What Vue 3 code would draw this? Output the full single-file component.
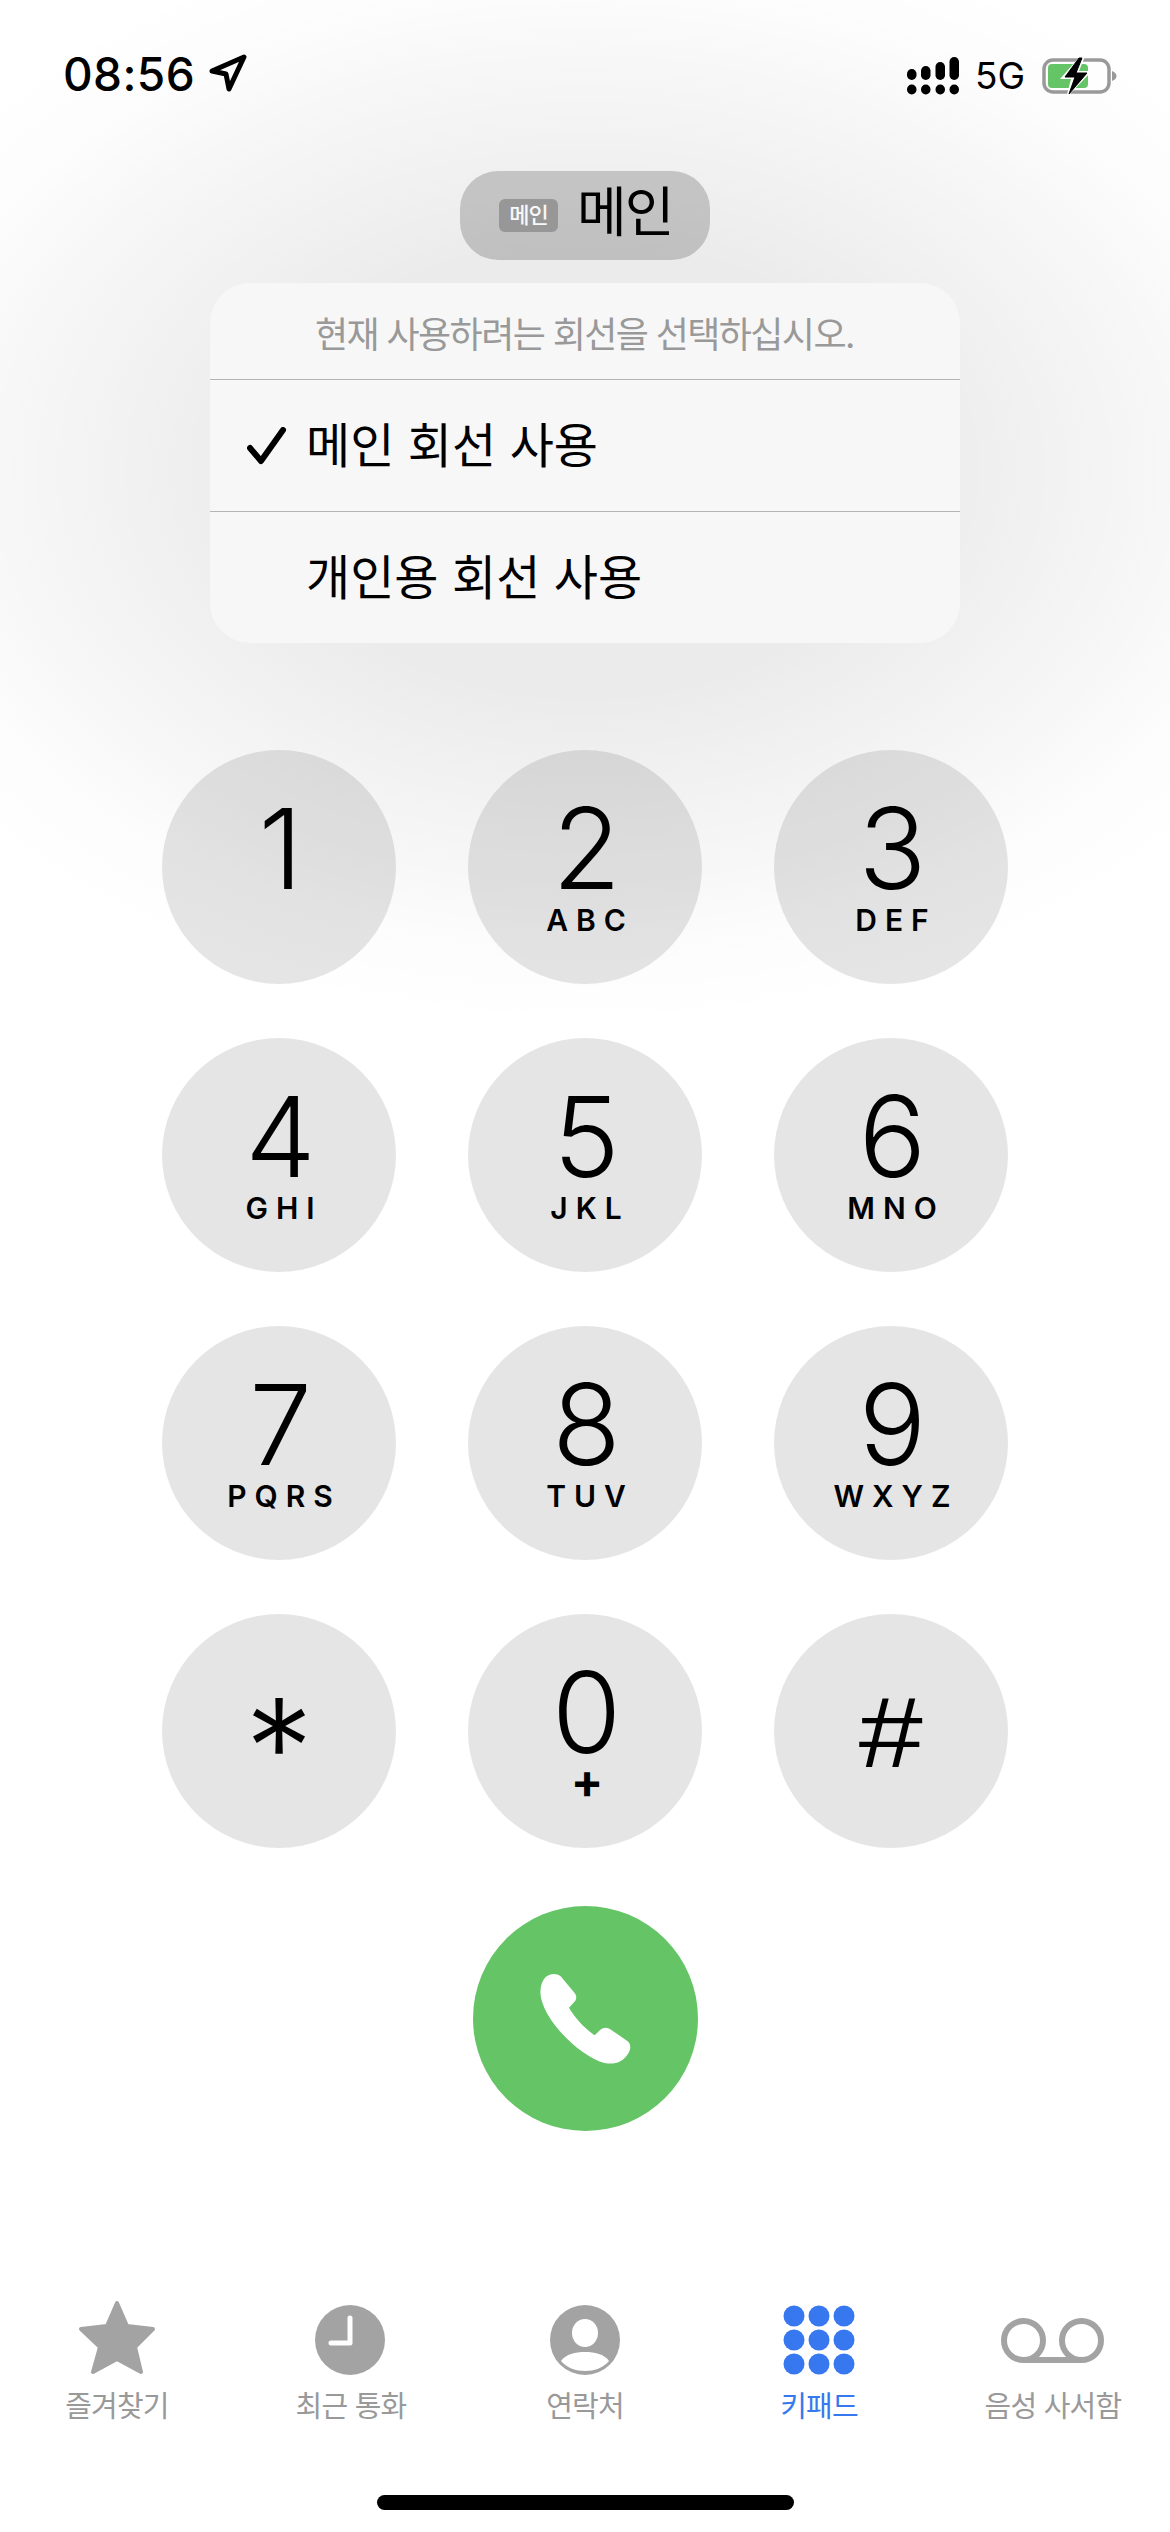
<script setup>
const keys = [
  { d: '1', l: '' }, { d: '2', l: 'ABC' }, { d: '3', l: 'DEF' },
  { d: '4', l: 'GHI' }, { d: '5', l: 'JKL' }, { d: '6', l: 'MNO' },
  { d: '7', l: 'PQRS' }, { d: '8', l: 'TUV' }, { d: '9', l: 'WXYZ' },
  { d: '*', l: '', k: 'star' }, { d: '0', l: '+', k: 'zero' }, { d: '#', l: '', k: 'hash' }
]
const tabs = [
  { id: 'star', label: '즐겨찾기' },
  { id: 'clock', label: '최근 통화' },
  { id: 'person', label: '연락처' },
  { id: 'pad', label: '키패드', active: true },
  { id: 'vm', label: '음성 사서함' }
]
const dots = [35, 60, 85].flatMap(x => [17, 41, 65].map(y => ({ x, y })))
</script>

<template>
  <div class="page">
    <header class="status">
      <div class="status-left">
        <span class="time">08:56</span>
        <svg class="loc" width="40" height="40" viewBox="0 0 40 40">
          <path d="M4 17 L36 3 L21 35 L18 20 Z" fill="none" stroke="#000" stroke-width="5" stroke-linejoin="round" />
        </svg>
      </div>
      <div class="status-right">
        <svg width="52" height="38" viewBox="0 0 52 38">
          <rect x="0" y="12" width="9.500" height="11" rx="4.700" />
          <rect x="14" y="9" width="9.500" height="14" rx="4.700" />
          <rect x="28.500" y="5" width="9.500" height="18" rx="4.700" />
          <rect x="42.500" y="0" width="9.500" height="23" rx="4.700" />
          <rect x="0" y="27.500" width="9.500" height="10" rx="4.700" />
          <rect x="14" y="27.500" width="9.500" height="10" rx="4.700" />
          <rect x="28.500" y="27.500" width="9.500" height="10" rx="4.700" />
          <rect x="42.500" y="27.500" width="9.500" height="10" rx="4.700" />
        </svg>
        <span class="net">5G</span>
        <svg class="batt" width="76" height="40" viewBox="0 0 76 40">
          <rect x="2" y="4" width="65" height="32" rx="9" fill="none" stroke="#999" stroke-width="3.500" />
          <path d="M70 15 C73 16 74.500 18 74.500 20 C74.500 22 73 24 70 25 Z" fill="#999" />
          <rect x="6" y="8" width="40" height="24" rx="4" fill="#65c466" />
          <path d="M40 -2 L18 23 L29 23 L24 42 L50 15 L37 15 L44 -2 Z" fill="#fff" />
          <path d="M37 2 L23 21 L33 21 L27 38 L45 17 L34 17 L40 2 Z" fill="#000" stroke="#000" stroke-width="1" stroke-linejoin="round" />
        </svg>
      </div>
    </header>

    <div class="pill">
      <span class="tag">메인</span>
      <span class="pill-text">메인</span>
    </div>

    <section class="menu">
      <div class="menu-head">현재 사용하려는 회선을 선택하십시오.</div>
      <div class="menu-row">
        <svg class="check" width="40" height="38" viewBox="0 0 40 38">
          <path d="M3 21 L14 34 L36 3" fill="none" stroke="#000" stroke-width="6" stroke-linecap="round" stroke-linejoin="round" />
        </svg>
        <span>메인 회선 사용</span>
      </div>
      <div class="menu-row">
        <span class="check-gap"></span>
        <span>개인용 회선 사용</span>
      </div>
    </section>

    <section class="keypad">
      <div v-for="key in keys" :key="key.d" class="key" :class="key.k">
        <span class="digit">{{ key.d }}</span>
        <span v-if="key.l" class="letters">{{ key.l }}</span>
      </div>
    </section>

    <div class="call">
      <svg width="225" height="225" viewBox="40 45 675 675">
        <path fill="#fff" d="M258 258 C272 247 290 245 303 256 L343 304 C352 314 352 326 343 334 L328 350 C345 380 375 412 405 433 L422 416 C432 408 444 408 454 416 L503 450 C514 458 514 472 507 485 C492 512 465 522 435 516 C370 500 265 405 245 325 C238 295 245 272 258 258 Z" />
      </svg>
    </div>

    <nav class="tabs">
      <div v-for="tab in tabs" :key="tab.id" class="tab" :class="{ active: tab.active }">
        <svg width="120" height="80" viewBox="0 0 120 80">
          <path v-if="tab.id === 'star'" d="M60 4 L70 27 L96 30 L78 48 L84 73 L60 60 L36 73 L43 48 L24 30 L50 27 Z" fill="#a3a3a3" stroke="#a3a3a3" stroke-width="4" stroke-linejoin="round" />
          <g v-else-if="tab.id === 'clock'">
            <circle cx="59" cy="41" r="35" fill="#a3a3a3" />
            <path d="M59 19 L59 44 L40 44" fill="none" stroke="#fff" stroke-width="5" stroke-linecap="round" stroke-linejoin="round" />
          </g>
          <g v-else-if="tab.id === 'person'">
            <circle cx="60" cy="41" r="35" fill="#a3a3a3" />
            <ellipse cx="60" cy="34" rx="13" ry="14" fill="#fff" />
            <path d="M36 62 C41 55 50 53 60 53 C70 53 79 55 84 62 C78 69 69 72 60 72 C51 72 42 69 36 62 Z" fill="#fff" />
          </g>
          <g v-else-if="tab.id === 'pad'">
            <circle v-for="dot in dots" :key="dot.x + '-' + dot.y" :cx="dot.x" :cy="dot.y" r="10.500" fill="#3778f0" />
          </g>
          <g v-else fill="none" stroke="#a3a3a3" stroke-width="6">
            <circle cx="30.500" cy="41.500" r="19.500" />
            <circle cx="88.500" cy="41.500" r="19.500" />
            <path d="M30.500 61 L88.500 61" />
          </g>
        </svg>
        <span class="tab-label">{{ tab.label }}</span>
      </div>
    </nav>

    <div class="home"></div>
  </div>
</template>

<style scoped>
.page {
  width: 1170px;
  height: 2532px;
  overflow: hidden;
  display: flex;
  flex-direction: column;
  align-items: center;
  font-family: Inter, "Noto Sans CJK KR", sans-serif;
  color: #000;
  background:
    radial-gradient(800px 560px at 585px 470px,
      rgba(0, 0, 0, 0.078) 0%,
      rgba(0, 0, 0, 0.078) 40%,
      rgba(0, 0, 0, 0.05) 59%,
      rgba(0, 0, 0, 0.03) 73%,
      rgba(0, 0, 0, 0.01) 85%,
      rgba(0, 0, 0, 0) 100%),
    #fff;
}
.status {
  width: 100%;
  height: 171px;
  box-sizing: border-box;
  padding: 54px 52px 0 63px;
  display: flex;
  justify-content: space-between;
  align-items: flex-start;
}
.status-left {
  display: flex;
  align-items: center;
  height: 40px;
  gap: 13px;
}
.time {
  font-size: 46px;
  font-weight: 550;
  line-height: 40px;
  letter-spacing: 0.4px;
}
.status-right {
  display: flex;
  align-items: center;
  height: 40px;
  padding-top: 2px;
}
.net {
  font-size: 37px;
  font-weight: 400;
  line-height: 40px;
  margin-left: 16px;
  margin-right: 17px;
}
.pill {
  width: 250px;
  height: 89px;
  border-radius: 38px;
  background: rgba(0, 0, 0, 0.18);
  display: flex;
  align-items: center;
  box-sizing: border-box;
  padding-left: 39px;
  gap: 19px;
}
.tag {
  width: 59px;
  height: 33px;
  border-radius: 6px;
  background: #979797;
  color: #f8f8f8;
  font-size: 22px;
  font-weight: 500;
  line-height: 33px;
  text-align: center;
  letter-spacing: -1px;
  flex: none;
}
.pill-text {
  font-size: 54px;
  line-height: 60px;
  letter-spacing: -2px;
  padding-bottom: 6px;
}
.menu {
  width: 750px;
  height: 360px;
  margin-top: 23px;
  border-radius: 40px;
  background: #f7f7f7;
  box-sizing: border-box;
  flex: none;
  display: flex;
  flex-direction: column;
}
.menu-head {
  height: 97px;
  box-sizing: border-box;
  padding: 8px 0 0 105px;
  font-size: 36px;
  line-height: 88px;
  letter-spacing: -1.6px;
  color: #999;
  border-bottom: 1px solid #b4b4b4;
}
.menu-row {
  height: 131px;
  box-sizing: border-box;
  display: flex;
  align-items: center;
  padding-left: 37px;
  font-size: 48px;
}
.menu-row span:last-child {
  padding-bottom: 7px;
  margin-left: -1px;
}
.menu-row + .menu-row {
  border-top: 1px solid #b4b4b4;
  height: 132px;
}
.check {
  width: 40px;
  margin-right: 20px;
  flex: none;
}
.check-gap {
  width: 60px;
  flex: none;
}
.keypad {
  margin-top: 107px;
  display: grid;
  grid-template-columns: repeat(3, 234px);
  column-gap: 72px;
  row-gap: 54px;
}
.key {
  width: 234px;
  height: 234px;
  border-radius: 50%;
  background: rgba(0, 0, 0, 0.1);
  display: flex;
  flex-direction: column;
  align-items: center;
  box-sizing: border-box;
  padding-top: 44px;
}
.digit {
  font-size: 112px;
  font-weight: 350;
  line-height: 108px;
  height: 108px;
  padding-left: 3px;
}
.letters {
  font-size: 30px;
  font-weight: 600;
  line-height: 30px;
  letter-spacing: 8px;
  margin-top: 3px;
  padding-left: 10px;
}
.key.star .digit {
  padding: 36px 0 0;
  font-size: 136px;
}
.key.hash .digit {
  padding: 20px 0 0 0;
  font-family: "Liberation Sans", sans-serif;
  font-size: 100px;
  font-weight: 400;
  transform: scaleX(1.15);
}
.key.zero .letters {
  font-size: 48px;
  font-weight: 700;
  line-height: 30px;
  margin-top: 0;
  padding-left: 4px;
  letter-spacing: 0;
}
.call {
  margin-top: 58px;
  width: 225px;
  height: 225px;
  flex: none;
  border-radius: 50%;
  background: #65c466;
  display: flex;
}
.tabs {
  margin-top: 168px;
  width: 100%;
  display: grid;
  grid-template-columns: repeat(5, 234px);
}
.tab {
  display: flex;
  flex-direction: column;
  align-items: center;
  color: #999;
}
.tab.active {
  color: #3778f0;
}
.tab-label {
  font-size: 29px;
  line-height: 40px;
  margin-top: 8px;
  letter-spacing: -0.8px;
  white-space: nowrap;
}
.home {
  margin-top: 68px;
  width: 417px;
  height: 15px;
  border-radius: 8px;
  background: #000;
  flex: none;
}
</style>
